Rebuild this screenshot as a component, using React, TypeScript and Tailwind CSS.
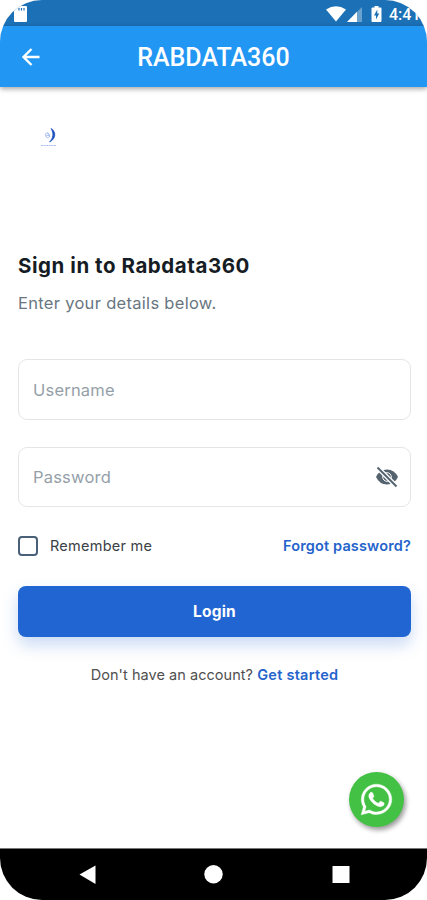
import { FaWhatsapp } from "react-icons/fa";

function StatusBar() {
  return (
    <div className="flex h-[26px] shrink-0 items-center bg-[#1b70b6] pl-[14px] text-white">
      <svg width="14" height="18" viewBox="0 0 14 18" className="mt-[1px]">
        <path d="M4 1h8q1 0 1 1v14q0 1-1 1H1q-1 0-1-1V5z" fill="#fff" />
        <path d="M5 3v2.500M7.500 3v2.500M10 3v2.500" stroke="#1b70b6" strokeWidth="1.200" />
      </svg>
      <svg width="20" height="16" viewBox="0 0 20 16" className="ml-[298px] mt-[2px] shrink-0">
        <path d="M0 3.500Q10-3 20 3.500L10 15.500z" fill="#fff" />
      </svg>
      <svg width="16" height="16" viewBox="0 0 16 16" className="mt-[1px] shrink-0">
        <path d="M16 1v15H1z" fill="#fff" opacity=".35" />
        <path d="M11 5.700V16H1z" fill="#fff" />
      </svg>
      <svg width="11" height="16" viewBox="0 0 10 16" className="ml-[9px] mt-[2px] shrink-0">
        <path d="M3 0h4v1.500h2q1 0 1 1V15q0 1-1 1H1q-1 0-1-1V2.500q0-1 1-1h2z" fill="#fff" />
        <path d="M5.800 3.500L2.500 9.500h2v4L7.700 7.500H5.800z" fill="#1b70b6" />
      </svg>
      <span className="ml-[7px] mt-[3px] whitespace-nowrap font-[Roboto] text-[16px] leading-none font-medium">4:41</span>
    </div>
  );
}

function Header() {
  return (
    <header className="relative z-10 flex h-[61px] shrink-0 items-center bg-[#2196f3] text-white shadow-[0_2px_5px_rgba(0,0,0,0.35)]">
      <svg width="24" height="24" viewBox="0 0 24 24" className="ml-[19px]">
        <path d="M20.500 12H5M12.500 4L4.500 12l8 8" fill="none" stroke="currentColor" strokeWidth="2.400" />
      </svg>
      <h1 className="flex-1 pt-[2px] pr-[43px] text-center font-[Roboto] text-[25px] leading-none font-medium">RABDATA360</h1>
    </header>
  );
}

function Logo() {
  return (
    <svg width="18" height="22" viewBox="0 0 18 22" className="ml-[22px] mt-[40px]">
      <path d="M11 1.500C16.500 4.500 16 12 9.500 15C13.300 11 14 6.500 11 1.500z" fill="#1d4fc0" stroke="#1d4fc0" strokeWidth=".7" />
      <path d="M5 7l3-1.500 2 4-3 1.500zM7 6l3 4M5 9l5-1" stroke="#7fa0e6" strokeWidth=".7" fill="none" opacity=".75" />
      <path d="M1 18.500h15" stroke="#7fa0e6" strokeWidth="1.200" strokeDasharray="2 .6" opacity=".65" />
    </svg>
  );
}

function EyeOff() {
  return (
    <svg width="24" height="24" viewBox="0 0 24 24">
      <path d="M1 12Q4.500 4.500 12 4.500T23 12Q19.500 19.500 12 19.500T1 12z" fill="#55636f" />
      <circle cx="12" cy="12" r="4.300" fill="none" stroke="#fff" strokeWidth="1" />
      <path d="M1.500 1.500l20 20" stroke="#fff" strokeWidth="4.600" />
      <path d="M2.500 2.500l19 19" stroke="#55636f" strokeWidth="2" />
    </svg>
  );
}

function NavBar() {
  return (
    <nav className="flex h-[52px] shrink-0 items-center border-t border-[#777] bg-black">
      <svg width="427" height="51" viewBox="0 0 427 51" fill="#fff">
        <path d="M79.500 25.500L95.500 16.500V35z" />
        <circle cx="213.500" cy="25.300" r="9.200" />
        <path d="M332.500 17h17v17h-17z" />
      </svg>
    </nav>
  );
}

export default function App() {
  return (
    <div className="h-[900px] w-[427px] bg-white">
      <div className="relative flex h-full flex-col overflow-hidden rounded-[42px] bg-white font-[Inter,sans-serif]">
        <StatusBar />
        <Header />
        <main className="flex flex-1 flex-col pr-[16px] pl-[18px]">
          <Logo />
          <h2 className="mt-[103px] text-[20.500px] leading-[28px] font-bold tracking-[0.55px] whitespace-nowrap text-[#161c24]">
            Sign in to Rabdata360
          </h2>
          <p className="mt-[11px] text-[16.500px] leading-[24px] tracking-[0.3px] text-[#69767f]">Enter your details below.</p>
          <input
            placeholder="Username"
            className="mt-[44px] h-[61px] w-full rounded-[9px] border border-[#e3e6e8] px-[14px] text-[16.500px] tracking-[0.2px] placeholder:text-[#959fa8]"
          />
          <div className="mt-[27px] flex h-[60px] items-center rounded-[9px] border border-[#e3e6e8] pr-[11px] pl-[14px]">
            <input
              type="password"
              placeholder="Password"
              className="min-w-0 flex-1 text-[16.500px] tracking-[0.2px] placeholder:text-[#959fa8]"
            />
            <EyeOff />
          </div>
          <div className="mt-[26px] flex h-[26px] items-center text-[14.500px] tracking-[0.25px]">
            <span className="size-[20px] rounded-[4px] border-2 border-[#496078]" />
            <span className="ml-[12px] text-[#3a4046]">Remember me</span>
            <a className="ml-auto font-semibold tracking-[0.15px] text-[#2463cb]">Forgot password?</a>
          </div>
          <button className="mt-[27px] h-[51px] w-full rounded-[8px] bg-[#2065d1] text-[15.500px] font-bold tracking-[0.2px] text-white shadow-[0_8px_16px_rgba(32,101,209,0.24)]">
            Login
          </button>
          <p className="mt-[27px] text-center text-[14.500px] leading-[22px] tracking-[0.05px] text-[#505050]">
            Don't have an account? <a className="font-semibold tracking-[0.25px] text-[#2463cb]">Get started</a>
          </p>
        </main>
        <div className="absolute top-[772px] left-[349px] flex size-[55px] items-center justify-center rounded-full bg-[#43c144] shadow-[2px_3px_5px_rgba(0,0,0,0.4)]">
          <FaWhatsapp className="size-[35px] text-white" stroke="currentColor" strokeWidth={6} />
        </div>
        <NavBar />
      </div>
    </div>
  );
}
